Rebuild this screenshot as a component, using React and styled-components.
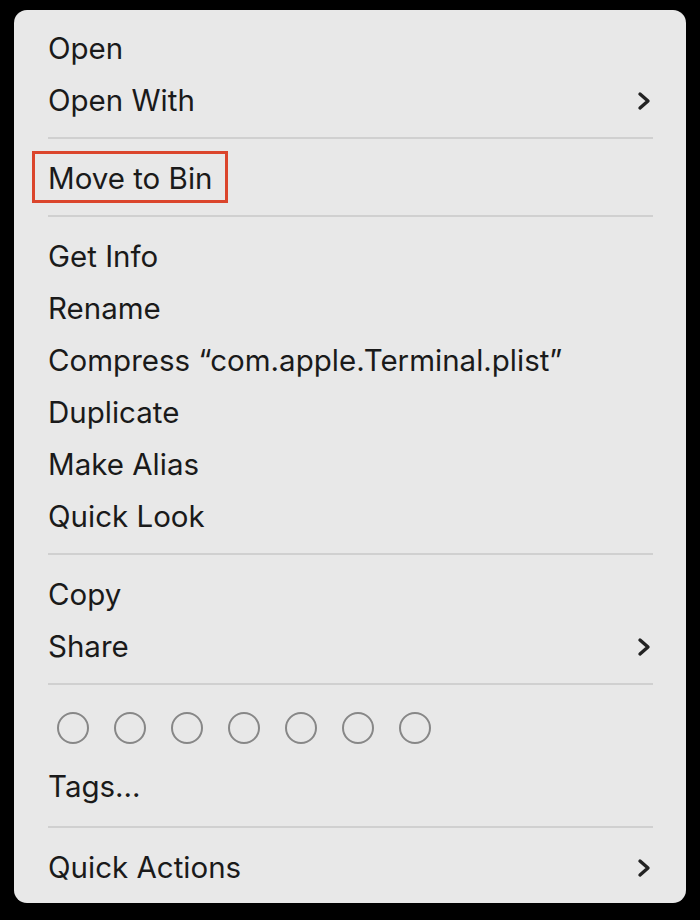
import * as React from 'react'
import styled, { createGlobalStyle } from 'styled-components'

const GlobalStyle = createGlobalStyle`
  html, body {
    margin: 0;
    padding: 0;
    background: #000;
  }
  body {
    width: 700px;
    height: 920px;
    overflow: hidden;
  }
`

const menu = [
  [{ label: 'Open' }, { label: 'Open With', sub: true }],
  [{ label: 'Move to Bin', marked: true }],
  [
    { label: 'Get Info' },
    { label: 'Rename' },
    { label: 'Compress \u201Ccom.apple.Terminal.plist\u201D' },
    { label: 'Duplicate' },
    { label: 'Make Alias' },
    { label: 'Quick Look' },
  ],
  [{ label: 'Copy' }, { label: 'Share', sub: true }],
  [{ tags: true }, { label: 'Tags\u2026' }],
  [{ label: 'Quick Actions', sub: true }],
]

const Chevron = () => (
  <svg width="16" height="22" viewBox="0 0 16 22" fill="none">
    <path d="M4 4 L12 11 L4 18" stroke="#222" strokeWidth="3.4" strokeLinecap="round" strokeLinejoin="round" />
  </svg>
)

const App = () => {
  return (
    <>
      <GlobalStyle />
      <Menu>
        {menu.map((group, gi) => (
          <React.Fragment key={gi}>
            {gi > 0 && <Separator $extra={gi === menu.length - 1} />}
            {group.map((item, ii) =>
              item.tags ? (
                <TagRow key={ii}>
                  {Array.from({ length: 7 }).map((_, ti) => (
                    <TagDot key={ti} />
                  ))}
                </TagRow>
              ) : (
                <Item key={ii}>
                  {item.marked ? <Highlight>{item.label}</Highlight> : <Label>{item.label}</Label>}
                  {item.sub && <Chevron />}
                </Item>
              )
            )}
          </React.Fragment>
        ))}
      </Menu>
    </>
  )
}

const Menu = styled.div`
  margin: 10px 0 0 14px;
  width: 672px;
  height: 893px;
  box-sizing: border-box;
  padding: 11px 33px 10px 34px;
  background: #e8e8e8;
  border-radius: 13px;
  display: flex;
  flex-direction: column;
  font-family: 'Inter', 'Liberation Sans', sans-serif;
  font-size: 29.5px;
  color: #1a1a1a;
`

const Item = styled.div`
  height: 52px;
  display: flex;
  align-items: center;
  justify-content: space-between;
  padding-top: 3px;
  box-sizing: border-box;
  svg {
    margin-right: 1px;
  }
`

const Label = styled.span`
  line-height: 1;
  white-space: nowrap;
`

const Highlight = styled.span`
  line-height: 1;
  white-space: nowrap;
  height: 52px;
  margin: -3px 0 0 -16px;
  padding: 3px 13px 0;
  box-sizing: border-box;
  display: inline-flex;
  align-items: center;
  border: 3px solid #db452c;
`

const Separator = styled.div`
  height: 2px;
  margin: ${(p) => (p.$extra ? '15px 0 12px' : '12px 0')};
  background: #d0d0d0;
`

const TagRow = styled.div`
  height: 62px;
  display: flex;
  align-items: center;
  gap: 25px;
  padding-left: 9px;
`

const TagDot = styled.span`
  width: 32px;
  height: 32px;
  box-sizing: border-box;
  border-radius: 50%;
  border: 2.5px solid #878787;
`

export default App
